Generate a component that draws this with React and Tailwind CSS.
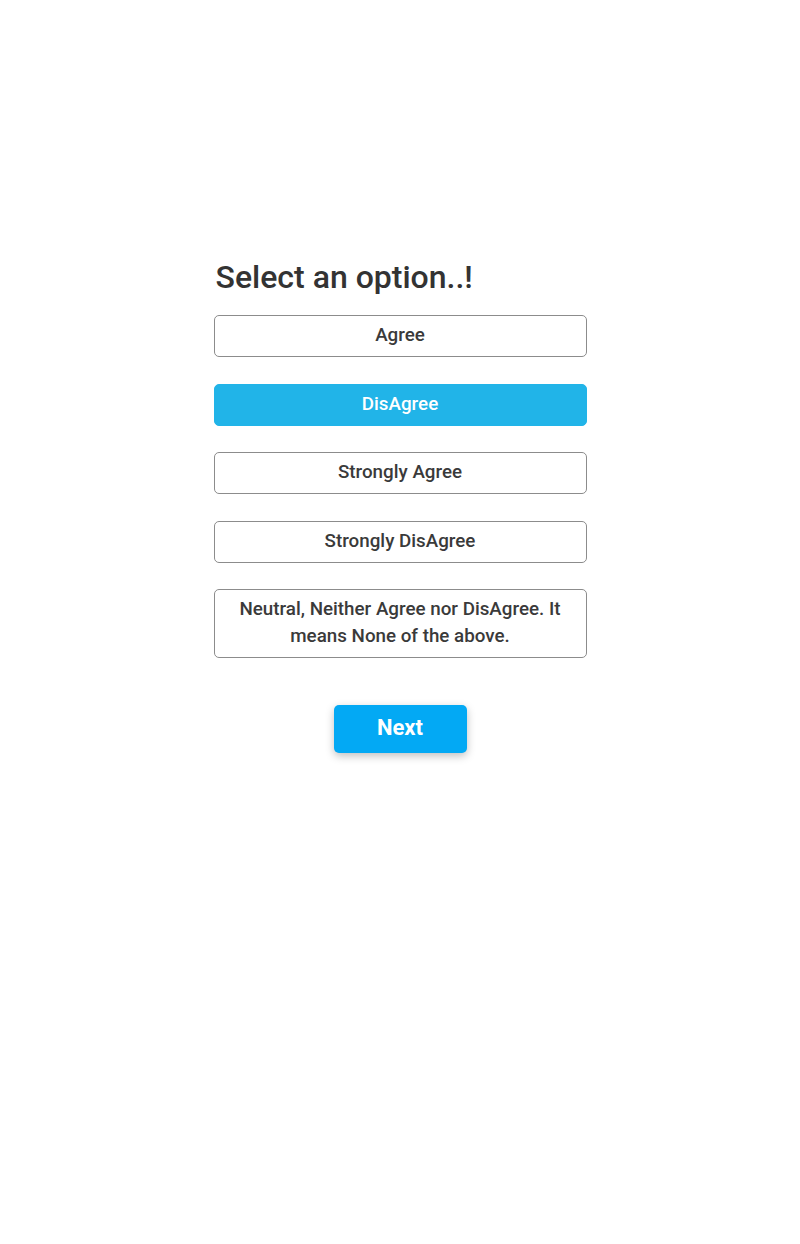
import { useState } from 'react';

const OPTIONS = [
  'Agree',
  'DisAgree',
  'Strongly Agree',
  'Strongly DisAgree',
  'Neutral, Neither Agree nor DisAgree. It means None of the above.',
];

const App = () => {
  const [selected, setSelected] = useState(1);

  return (
    <div className="min-h-[1244px] bg-white flex justify-center" style={{ fontFamily: 'Roboto, "Noto Sans", sans-serif' }}>
      <div className="w-[373px] pt-[258px] flex flex-col">
        <h1 className="text-[32px] leading-[38px] font-medium text-[#333333] pl-[2px] mb-[19px]">Select an option..!</h1>

        <div className="flex flex-col gap-[26.5px]">
          {OPTIONS.map((opt, i) => (
            <button
              key={opt}
              onClick={() => setSelected(i)}
              className={`w-full rounded-[5px] px-5 pt-[6px] pb-[7px] text-[18.8px] leading-[27px] font-medium text-center ${
                selected === i
                  ? 'bg-[#21b4e8] text-white border border-[#21b4e8]'
                  : 'bg-white text-[#3a3a3a] border border-[#8c8c8c]'
              }`}
            >
              {opt}
            </button>
          ))}
        </div>

        <div className="flex justify-center mt-[47px]">
          <button className="w-[133px] h-[48px] rounded-[5px] bg-[#03a9f4] text-white text-[22px] leading-[44px] pb-[2px] font-bold shadow-[0_3px_8px_rgba(0,0,0,0.25)]">
            Next
          </button>
        </div>
      </div>
    </div>
  );
};

export default App;
